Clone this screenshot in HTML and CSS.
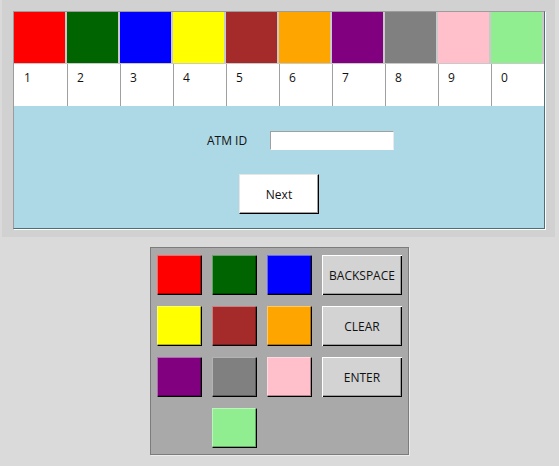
FILE: index.html
```html
<!DOCTYPE html>
<html>
<head>
<meta charset="utf-8">
<link rel="stylesheet" href="styles.css">
</head>
<body>
<div class="top">
  <div class="panel">
    <div class="swatches">
      <div class="sw red"></div><div class="sw dgreen"></div><div class="sw blue"></div><div class="sw yellow"></div><div class="sw brown"></div>
      <div class="sw orange"></div><div class="sw purple"></div><div class="sw gray"></div><div class="sw pink"></div><div class="sw lgreen"></div>
    </div>
    <div class="nums">
      <div class="num">1</div><div class="num">2</div><div class="num">3</div><div class="num">4</div><div class="num">5</div>
      <div class="num">6</div><div class="num">7</div><div class="num">8</div><div class="num">9</div><div class="num">0</div>
    </div>
    <div class="form">
      <div class="row">
        <span class="label">ATM ID</span>
        <input class="entry" type="text">
      </div>
      <button class="next">Next</button>
    </div>
  </div>
</div>
<div class="pad">
  <button class="key red"></button>
  <button class="key dgreen"></button>
  <button class="key blue"></button>
  <button class="key text">BACKSPACE</button>
  <button class="key yellow"></button>
  <button class="key brown"></button>
  <button class="key orange"></button>
  <button class="key text">CLEAR</button>
  <button class="key purple"></button>
  <button class="key gray"></button>
  <button class="key pink"></button>
  <button class="key text">ENTER</button>
  <button class="key lgreen col2"></button>
</div>
</body>
</html>
```
FILE: styles.css
```css
html, body {
  margin: 0;
  padding: 0;
}
body {
  width: 559px;
  height: 466px;
  background: #dadada;
  font-family: "Open Sans", "Noto Sans", sans-serif;
  font-size: 12px;
  color: #111;
  overflow: hidden;
}
.top {
  box-sizing: border-box;
  margin-left: 2px;
  width: 553px;
  height: 237px;
  padding: 11px 0 0 11px;
  background: #d1d1d1;
}
.panel {
  width: 530px;
  border: 1px solid;
  border-color: #9c9c9c #4f6f76 #4f6f76 #9c9c9c;
  box-shadow: 1px 1px 0 #ffffff;
}
.swatches {
  display: grid;
  grid-template-columns: repeat(10, 53px);
  height: 52px;
  background: #c9c9c9;
}
.sw {
  width: 51px;
  height: 51px;
}
.nums {
  display: grid;
  grid-template-columns: repeat(10, 53px);
  height: 42px;
  background: #ffffff;
}
.num {
  box-sizing: border-box;
  padding: 6px 0 0 10px;
  line-height: 16px;
}
.num + .num {
  border-left: 1px solid #a0a0a0;
  padding-left: 9px;
}
.form {
  height: 122px;
  background: #add8e6;
  display: flex;
  flex-direction: column;
  align-items: center;
  box-sizing: border-box;
  padding-top: 25px;
}
.row {
  align-self: flex-start;
  display: flex;
  align-items: center;
  gap: 23px;
  padding-left: 193px;
  height: 19px;
}
.label {
  line-height: 16px;
}
.entry {
  box-sizing: border-box;
  width: 124px;
  height: 19px;
  margin: 0;
  padding: 0;
  border: 1px solid;
  border-color: #a0a0a0 #e9e9e9 #ffffff #a0a0a0;
  background: #ffffff;
  outline: none;
}
.next {
  margin-top: 24px;
  box-sizing: border-box;
  width: 80px;
  height: 40px;
  padding: 0;
  background: #ffffff;
  border: 1px solid;
  border-color: #e6e6e6 #000000 #000000 #e6e6e6;
  box-shadow: inset -1px -1px 0 #a0a0a0;
  font-family: inherit;
  font-size: 12px;
  color: #111;
}
.pad {
  display: grid;
  grid-template-columns: 45px 45px 45px 80px;
  grid-template-rows: repeat(4, 40px);
  column-gap: 10px;
  row-gap: 11px;
  width: max-content;
  margin: 10px auto 0;
  padding: 7px 6px 6px 6px;
  background: #a9a9a9;
  border: 1px solid;
  border-color: #7c7c7c #7c7c7c #7c7c7c #7c7c7c;
  box-shadow: 1px 1px 0 #ececec;
}
.key {
  margin: 0;
  padding: 0;
  border: none;
  box-shadow: inset 1px 1px 0 rgba(255, 255, 255, 0.4), inset -1px -1px 0 #000000, inset -2px -2px 0 rgba(0, 0, 0, 0.3);
  font-family: inherit;
  font-size: 12px;
  color: #111;
}
.key.text {
  background: #d3d3d3;
  box-shadow: inset 1px 1px 0 #ffffff, inset -1px -1px 0 #000000, inset -2px -2px 0 #9a9a9a;
}
.col2 {
  grid-column: 2;
}
.red { background: #ff0000; }
.dgreen { background: #006400; }
.blue { background: #0000ff; }
.yellow { background: #ffff00; }
.brown { background: #a52a2a; }
.orange { background: #ffa500; }
.purple { background: #800080; }
.gray { background: #808080; }
.pink { background: #ffc0cb; }
.lgreen { background: #90ee90; }
```
